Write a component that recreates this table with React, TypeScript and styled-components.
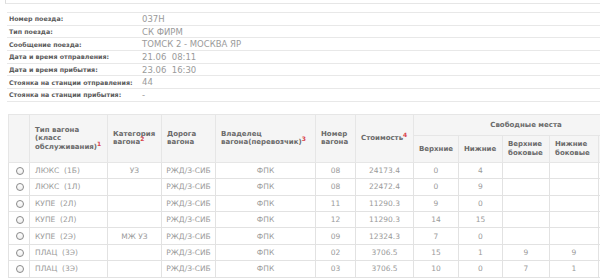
import React from "react";
import styled, { createGlobalStyle } from "styled-components";

const Global = createGlobalStyle`
  html, body { margin: 0; padding: 0; background: #fff; overflow: hidden; }
  body { font-family: "DejaVu Sans", Verdana, sans-serif; }
`;

const Page = styled.div`
  width: 600px;
  height: 279px;
  overflow: hidden;
`;

const TopStub = styled.div`
  height: 3px;
  margin-left: 5px;
  border-left: 1px solid #dcdcdc;
  border-bottom: 1px solid #e6e6e6;
`;

const InfoList = styled.div`
  margin-top: 8px;
  margin-left: 7px;
  border-bottom: 1px solid #e8e8e8;
`;

const InfoRow = styled.div`
  display: flex;
  align-items: center;
  height: 11.7px;
  border-top: 1px solid #e8e8e8;
  background: #fff;
`;

const InfoLabel = styled.div`
  width: 133px;
  padding-left: 2px;
  font-size: 6.3px;
  font-weight: bold;
  color: #5a5a5a;
  white-space: nowrap;
`;

const InfoValue = styled.div`
  font-size: 8.5px;
  color: #9a9a9a;
  white-space: pre;
`;

const Table = styled.table`
  margin-top: 12px;
  margin-left: 8px;
  border-collapse: collapse;
  table-layout: fixed;
  width: 630px;
`;

const HeadRow = styled.tr<{ $h: number }>`
  height: ${(p) => p.$h}px;
`;

const Th = styled.th<{ $center?: boolean }>`
  background: #f5f5f5;
  border: 1px solid #e6e6e6;
  font-size: 7px;
  font-weight: bold;
  color: #6a6a6a;
  text-align: ${(p) => (p.$center ? "center" : "left")};
  vertical-align: middle;
  padding: 0 5px;
  line-height: 8.5px;
`;

const Sup = styled.sup`
  color: #d9434a;
  font-size: 6px;
  line-height: 0;
`;

const Tr = styled.tr`
  height: 16.4px;
`;

const Td = styled.td<{ $left?: boolean }>`
  border: 1px solid #e2e2e2;
  font-size: 7.5px;
  line-height: 9px;
  color: #9a9a9a;
  text-align: ${(p) => (p.$left ? "left" : "center")};
  padding: 0 ${(p) => (p.$left ? "5px" : "2px")};
  white-space: pre;
  overflow: hidden;
`;

const RadioCell = styled.td`
  border: 1px solid #e2e2e2;
  text-align: center;
  padding: 0;
  line-height: 8px;
`;

const Radio = styled.span`
  display: inline-block;
  width: 6px;
  height: 6px;
  border: 1px solid #8a8a8a;
  border-radius: 50%;
  background: linear-gradient(#fff, #eee);
  vertical-align: middle;
  margin-left: 1px;
`;

const info: [string, string][] = [
  ["Номер поезда:", "037Н"],
  ["Тип поезда:", "СК ФИРМ"],
  ["Сообщение поезда:", "ТОМСК 2 - МОСКВА ЯР"],
  ["Дата и время отправления:", "21.06  08:11"],
  ["Дата и время прибытия:", "23.06  16:30"],
  ["Стоянка на станции отправления:", "44"],
  ["Стоянка на станции прибытия:", "-"],
];

type Row = [string, string, string, string, string, string, string, string, string, string];

const rows: Row[] = [
  ["ЛЮКС  (1Б)", "УЗ", "РЖД/З-СИБ", "ФПК", "08", "24173.4", "0", "4", "", ""],
  ["ЛЮКС  (1Л)", "", "РЖД/З-СИБ", "ФПК", "08", "22472.4", "0", "9", "", ""],
  ["КУПЕ  (2Л)", "", "РЖД/З-СИБ", "ФПК", "11", "11290.3", "9", "0", "", ""],
  ["КУПЕ  (2Л)", "", "РЖД/З-СИБ", "ФПК", "12", "11290.3", "14", "15", "", ""],
  ["КУПЕ  (2Э)", "МЖ УЗ", "РЖД/З-СИБ", "ФПК", "09", "12324.3", "7", "0", "", ""],
  ["ПЛАЦ  (3Э)", "", "РЖД/З-СИБ", "ФПК", "02", "3706.5", "15", "1", "9", "9"],
  ["ПЛАЦ  (3Э)", "", "РЖД/З-СИБ", "ФПК", "03", "3706.5", "10", "0", "7", "1"],
];

const widths = [21, 78, 54, 54, 100, 40, 58, 45, 44, 47, 49, 40];

export default function App() {
  return (
    <Page>
      <Global />
      <TopStub />
      <InfoList>
        {info.map(([l, v]) => (
          <InfoRow key={l}>
            <InfoLabel>{l}</InfoLabel>
            <InfoValue>{v}</InfoValue>
          </InfoRow>
        ))}
      </InfoList>
      <Table>
        <colgroup>
          {widths.map((w, i) => (
            <col key={i} style={{ width: w }} />
          ))}
        </colgroup>
        <thead>
          <HeadRow $h={21}>
            <Th rowSpan={2} />
            <Th rowSpan={2}>
              Тип вагона (класс обслуживания)<Sup>1</Sup>
            </Th>
            <Th rowSpan={2}>
              Категория вагона<Sup>2</Sup>
            </Th>
            <Th rowSpan={2}>Дорога вагона</Th>
            <Th rowSpan={2}>
              Владелец вагона(перевозчик)<Sup>3</Sup>
            </Th>
            <Th rowSpan={2}>Номер вагона</Th>
            <Th rowSpan={2}>
              Стоимость<Sup>4</Sup>
            </Th>
            <Th colSpan={5} $center>
              Свободные места
            </Th>
          </HeadRow>
          <HeadRow $h={27}>
            <Th>Верхние</Th>
            <Th>Нижние</Th>
            <Th>Верхние боковые</Th>
            <Th>Нижние боковые</Th>
            <Th />
          </HeadRow>
        </thead>
        <tbody>
          {rows.map((r, i) => (
            <Tr key={i}>
              <RadioCell>
                <Radio />
              </RadioCell>
              <Td $left>{r[0]}</Td>
              {r.slice(1).map((c, j) => (
                <Td key={j}>{c}</Td>
              ))}
              <Td />
            </Tr>
          ))}
        </tbody>
      </Table>
    </Page>
  );
}
